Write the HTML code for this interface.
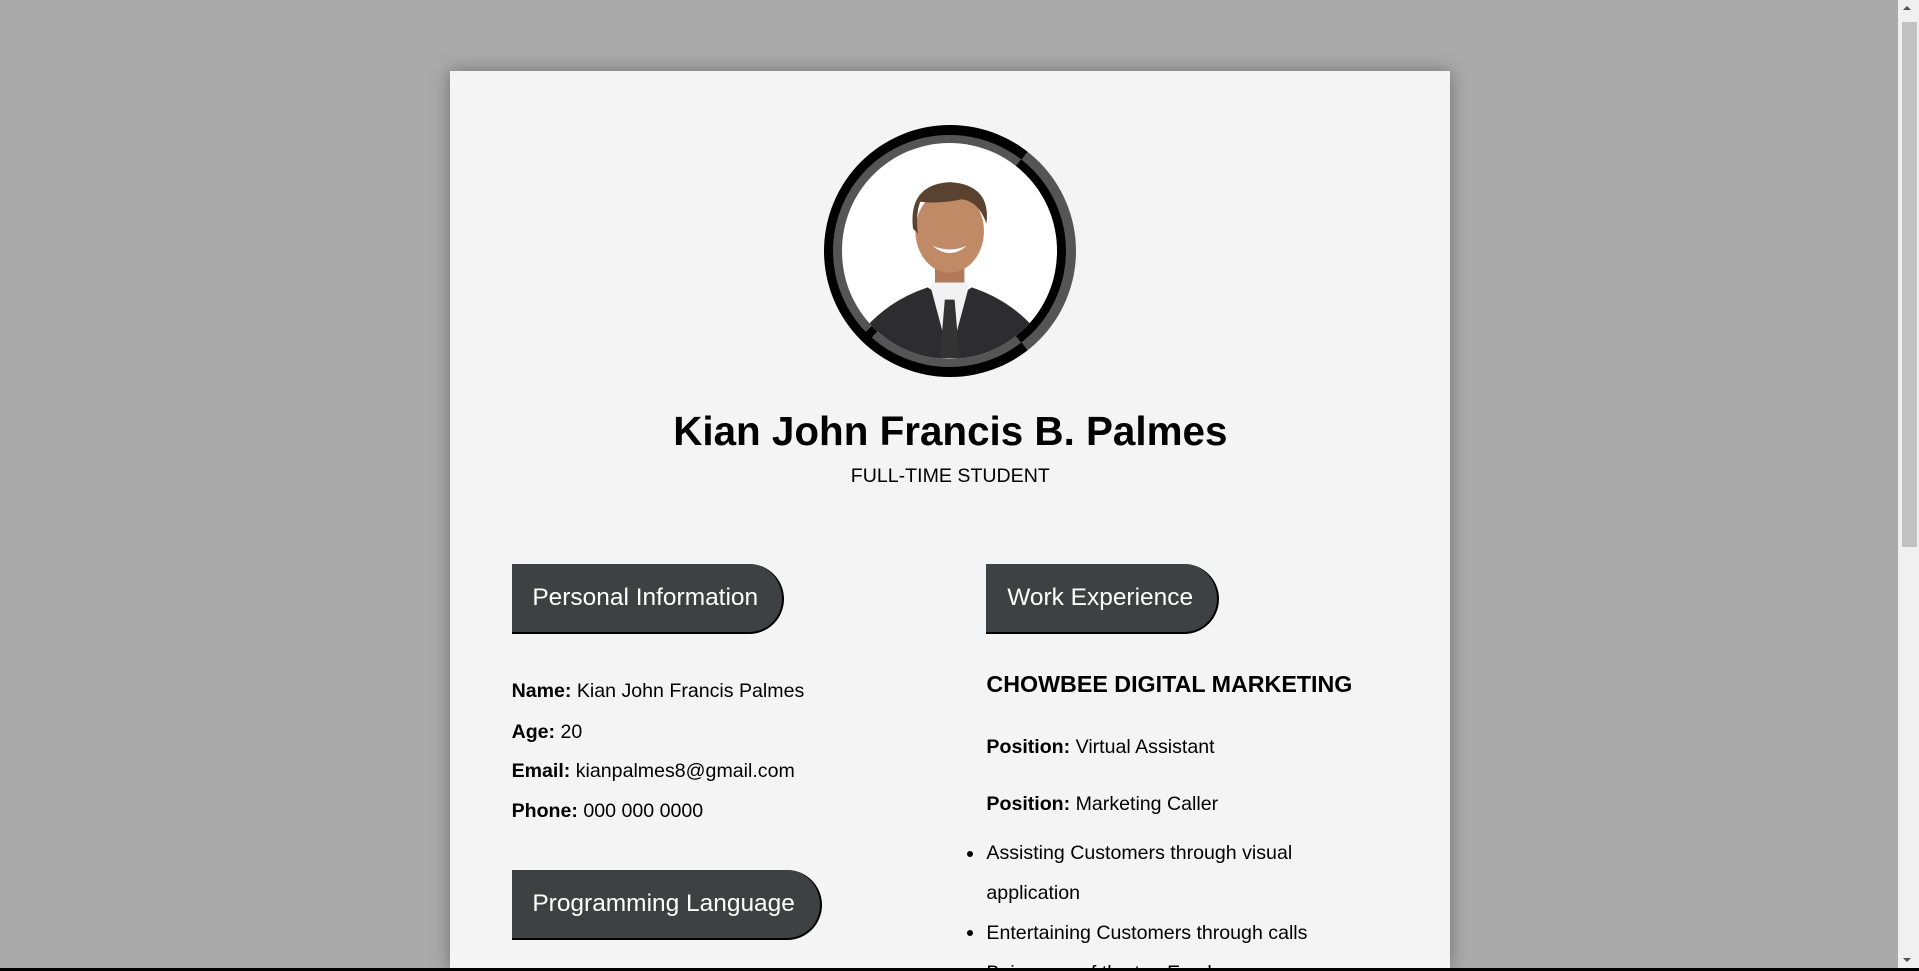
<!DOCTYPE html>
<html><head><meta charset="utf-8">
<style>
html{zoom:1.22385;overflow:hidden;height:793px}
*{box-sizing:border-box;margin:0;padding:0}
body{width:1568px;height:793px;background:#aaaaaa;overflow:hidden;position:relative;font-family:"Liberation Sans",Arial,sans-serif;color:#000}
.card{position:absolute;left:368px;top:58px;width:817px;height:735px;background:#f4f4f4;box-shadow:0 0 14px rgba(0,0,0,.35)}
.av{position:absolute;left:673px;top:102px;width:206px;height:206px;border-radius:50%;background:conic-gradient(from 0deg,#000 0deg 38deg,#555 38deg 142deg,#000 142deg 218deg,#000 218deg 360deg)}
.av2{position:absolute;left:8px;top:8px;width:190px;height:190px;border-radius:50%;background:conic-gradient(#555 0deg 38deg,#000 38deg 142deg,#555 142deg 222deg,#000 222deg 226deg,#555 226deg 360deg)}
.photo{position:absolute;left:7px;top:7px;width:176px;height:176px;border-radius:50%;background:#fff;overflow:hidden}
h1{position:absolute;left:368px;width:817px;top:333px;text-align:center;font-size:33px;font-weight:bold}
.sub{position:absolute;left:368px;width:817px;top:380px;text-align:center;font-size:16px}
.btn{position:absolute;height:57px;background:#3d4141;color:#fff;font-size:20px;line-height:56px;padding-left:17px;border-radius:0 30px 30px 0;border-right:2px solid #000;border-bottom:2px solid #000}
.t{position:absolute;font-size:16px;white-space:nowrap}
b{font-weight:bold}
.dot{position:absolute;width:5px;height:5px;border-radius:50%;background:#000}
.sb{position:absolute;left:1551px;top:0;width:17px;height:793px;background:#f0f0f0}
</style></head><body>
<div class="card"></div>
<div class="av"><div class="av2"><div class="photo">
<svg width="176" height="176" viewBox="0 0 176 176">
<path d="M20 150 Q40 128 70 118 L88 130 L106 118 Q136 128 156 150 L160 176 L16 176Z" fill="#2d2c2e"/>
<path d="M72 116 L88 176 L104 116 L96 108 L80 108Z" fill="#f2f2f2"/>
<path d="M84 128 L92 128 L96 176 L80 176Z" fill="#333"/>
<rect x="76" y="92" width="24" height="22" fill="#b07a5a"/>
<ellipse cx="88" cy="72" rx="28" ry="34" fill="#c08a66"/>
<path d="M58 70 Q54 34 88 32 Q122 34 118 66 Q112 48 98 46 Q80 50 64 48 Q60 58 62 74Z" fill="#5a4230"/>
<path d="M74 84 Q88 96 102 84 Q88 90 74 84Z" fill="#fff"/>
</svg></div></div></div>
<h1>Kian John Francis B. Palmes</h1>
<div class="sub">FULL-TIME STUDENT</div>

<div class="btn" style="left:418px;top:461px;width:223px">Personal Information</div>
<div class="btn" style="left:806px;top:461px;width:190px">Work Experience</div>
<div class="btn" style="left:418px;top:711px;width:254px">Programming Language</div>

<div class="t" style="left:418px;top:556px"><b>Name:</b> Kian John Francis Palmes</div>
<div class="t" style="left:418px;top:589px"><b>Age:</b> 20</div>
<div class="t" style="left:418px;top:621px"><b>Email:</b> kianpalmes8@gmail.com</div>
<div class="t" style="left:418px;top:654px"><b>Phone:</b> 000 000 0000</div>

<div class="t" style="left:806px;top:548px;font-size:19px;font-weight:bold">CHOWBEE DIGITAL MARKETING</div>
<div class="t" style="left:806px;top:601px"><b>Position:</b> Virtual Assistant</div>
<div class="t" style="left:806px;top:648px"><b>Position:</b> Marketing Caller</div>
<div class="dot" style="left:790px;top:695px"></div>
<div class="t" style="left:806px;top:688px">Assisting Customers through visual</div>
<div class="t" style="left:806px;top:721px">application</div>
<div class="dot" style="left:790px;top:760px"></div>
<div class="t" style="left:806px;top:753px">Entertaining Customers through calls</div>
<div class="t" style="left:806px;top:786px">Being one of the top Employees</div>

<div class="sb">
<div style="position:absolute;left:3px;top:18px;width:12px;height:429px;background:#c1c1c1"></div>
<div style="position:absolute;left:4px;top:5px;width:0;height:0;border-left:4px solid transparent;border-right:4px solid transparent;border-bottom:4px solid #505050"></div>
<div style="position:absolute;left:4px;top:783px;width:0;height:0;border-left:4px solid transparent;border-right:4px solid transparent;border-top:4px solid #505050"></div>
</div>
<div style="position:absolute;left:0;top:791px;width:1568px;height:2px;background:#000"></div>
</body></html>
